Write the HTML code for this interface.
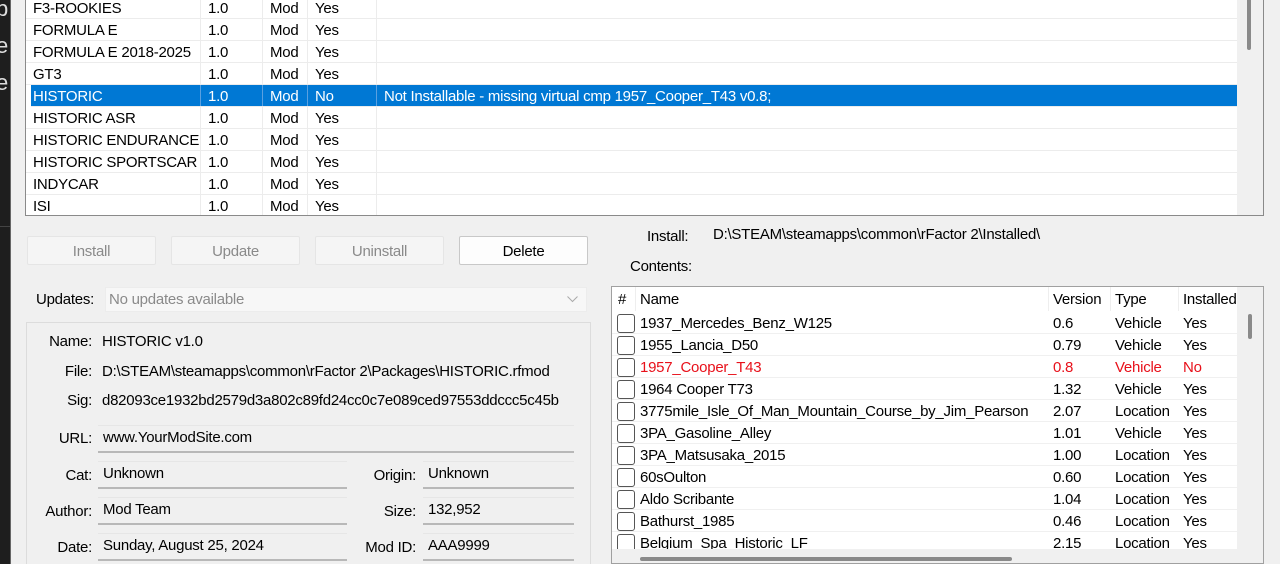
<!DOCTYPE html>
<html><head><meta charset="utf-8"><style>
*{box-sizing:border-box;margin:0;padding:0}
html,body{width:1280px;height:564px;overflow:hidden}
body{background:#f0f0f0;font-family:"Liberation Sans",sans-serif;font-size:15px;letter-spacing:-0.25px;color:#000;position:relative}
.a{position:absolute;white-space:nowrap}
.dark{left:0;top:0;width:10px;height:564px;background:#1e1e1e;color:#ddd;font-size:22px;overflow:hidden}
.tbl{left:25px;top:-3px;width:1239px;height:219px;background:#fff;border:1px solid #8a8a8a;border-top:none;overflow:hidden}
.row{position:absolute;left:0;height:22px;width:1212px;border-bottom:1px solid #ececec;line-height:23px}
.row span{position:absolute;top:0;height:21px;padding-left:7px;border-right:1px solid #ececec}
.sel{background:#0078d4;color:#fff}
.sel span{border-right-color:#5aa0e0}
.vs{position:absolute;right:0;top:0;width:26px;height:219px;background:#f0f0f0}
.btn{top:236px;height:29px;width:129px;border:1px solid #e5e5e5;background:#f5f5f5;color:#8a8a8a;text-align:center;line-height:29px;border-radius:2px}
.lbl{text-align:right}
.fld{background:#f0f0f0;border-top:1px solid #e6e6e6;border-bottom:2px solid #b8b8b8;padding-left:5px;line-height:24px;height:28px}
.ct{left:611px;top:286px;width:653px;height:278px;background:#fff;border:1px solid #a0a0a0;overflow:hidden}
.crow{position:absolute;left:0;height:22px;width:625px;border-bottom:1px solid #f0f0f0;line-height:23px}
.crow span{position:absolute;top:0;padding-left:4px}
.cb{position:absolute;left:5px;top:2px;width:18px;height:19px;border:1px solid #555;border-radius:3px;background:#fff}
.red{color:#e8101a}
</style></head><body>
<div class="a dark"><div style="position:absolute;left:-4px;top:-10px;line-height:37px">b<br>e<br>e</div><div style="position:absolute;left:0;top:226px;width:10px;height:1px;background:#444"></div></div>
<div style="position:absolute;left:10px;top:0;width:1px;height:564px;background:#666"></div>

<div class="a tbl">
<div class="row" style="top:0"><span style="left:0;width:175px">F3-ROOKIES</span><span style="left:175px;width:62px">1.0</span><span style="left:237px;width:45px">Mod</span><span style="left:282px;width:69px">Yes</span></div>
<div class="row" style="top:22px"><span style="left:0;width:175px">FORMULA E</span><span style="left:175px;width:62px">1.0</span><span style="left:237px;width:45px">Mod</span><span style="left:282px;width:69px">Yes</span></div>
<div class="row" style="top:44px"><span style="left:0;width:175px">FORMULA E 2018-2025</span><span style="left:175px;width:62px">1.0</span><span style="left:237px;width:45px">Mod</span><span style="left:282px;width:69px">Yes</span></div>
<div class="row" style="top:66px"><span style="left:0;width:175px">GT3</span><span style="left:175px;width:62px">1.0</span><span style="left:237px;width:45px">Mod</span><span style="left:282px;width:69px">Yes</span></div>
<div class="row sel" style="top:88px;left:5px;width:1207px"><span style="left:-5px;width:175px;padding-left:7px">HISTORIC</span><span style="left:170px;width:62px">1.0</span><span style="left:232px;width:45px">Mod</span><span style="left:277px;width:69px">No</span><span style="left:346px;border:none">Not Installable - missing virtual cmp 1957_Cooper_T43 v0.8;</span></div>
<div class="row" style="top:110px"><span style="left:0;width:175px">HISTORIC ASR</span><span style="left:175px;width:62px">1.0</span><span style="left:237px;width:45px">Mod</span><span style="left:282px;width:69px">Yes</span></div>
<div class="row" style="top:132px"><span style="left:0;width:175px">HISTORIC ENDURANCE</span><span style="left:175px;width:62px">1.0</span><span style="left:237px;width:45px">Mod</span><span style="left:282px;width:69px">Yes</span></div>
<div class="row" style="top:154px"><span style="left:0;width:175px">HISTORIC SPORTSCAR</span><span style="left:175px;width:62px">1.0</span><span style="left:237px;width:45px">Mod</span><span style="left:282px;width:69px">Yes</span></div>
<div class="row" style="top:176px"><span style="left:0;width:175px">INDYCAR</span><span style="left:175px;width:62px">1.0</span><span style="left:237px;width:45px">Mod</span><span style="left:282px;width:69px">Yes</span></div>
<div class="row" style="top:198px;border:none"><span style="left:0;width:175px">ISI</span><span style="left:175px;width:62px">1.0</span><span style="left:237px;width:45px">Mod</span><span style="left:282px;width:69px">Yes</span></div>
<div class="vs"><div style="position:absolute;left:10px;top:0;width:4px;height:53px;background:#8a8a8a;border-radius:2px"></div></div>
</div>

<div class="a btn" style="left:27px">Install</div>
<div class="a btn" style="left:171px">Update</div>
<div class="a btn" style="left:315px">Uninstall</div>
<div class="a btn" style="left:459px;color:#000;background:#fdfdfd;border-color:#c8c8c8">Delete</div>

<div class="a" style="left:647px;top:228px">Install:</div>
<div class="a" style="left:713px;top:226px">D:\STEAM\steamapps\common\rFactor 2\Installed\</div>
<div class="a" style="left:630px;top:258px">Contents:</div>

<div class="a" style="left:36px;top:291px">Updates:</div>
<div class="a" style="left:105px;top:287px;width:482px;height:25px;background:#f7f7f7;border:1px solid #ececec;color:#8a8a8a;padding-left:3px;line-height:24px">No updates available<svg style="position:absolute;right:8px;top:8px" width="11" height="7"><path d="M0.5 0.5L5.5 5.5L10.5 0.5" fill="none" stroke="#aaa"/></svg></div>

<div class="a" style="left:26px;top:322px;width:565px;height:250px;border:1px solid #dcdcdc"></div>
<div class="a lbl" style="left:30px;width:62px;top:333px">Name:</div><div class="a" style="left:102px;top:333px">HISTORIC v1.0</div>
<div class="a lbl" style="left:30px;width:62px;top:363px">File:</div><div class="a" style="left:102px;top:363px">D:\STEAM\steamapps\common\rFactor 2\Packages\HISTORIC.rfmod</div>
<div class="a lbl" style="left:30px;width:62px;top:392px">Sig:</div><div class="a" style="left:102px;top:392px">d82093ce1932bd2579d3a802c89fd24cc0c7e089ced97553ddccc5c45b</div>

<div class="a lbl" style="left:30px;width:62px;top:430px">URL:</div><div class="a fld" style="left:98px;top:425px;width:476px">www.YourModSite.com</div>
<div class="a lbl" style="left:30px;width:62px;top:467px">Cat:</div><div class="a fld" style="left:98px;top:461px;width:249px">Unknown</div>
<div class="a lbl" style="left:340px;width:76px;top:467px">Origin:</div><div class="a fld" style="left:423px;top:461px;width:151px">Unknown</div>
<div class="a lbl" style="left:30px;width:62px;top:503px">Author:</div><div class="a fld" style="left:98px;top:497px;width:249px">Mod Team</div>
<div class="a lbl" style="left:340px;width:76px;top:503px">Size:</div><div class="a fld" style="left:423px;top:497px;width:151px">132,952</div>
<div class="a lbl" style="left:30px;width:62px;top:539px">Date:</div><div class="a fld" style="left:98px;top:533px;width:249px">Sunday, August 25, 2024</div>
<div class="a lbl" style="left:340px;width:76px;top:539px">Mod ID:</div><div class="a fld" style="left:423px;top:533px;width:151px">AAA9999</div>

<div class="a ct">
<div class="crow" style="top:0;height:24px;border:none;line-height:26px"><span style="left:2px">#</span><span style="left:23px;height:24px;border-left:1px solid #eee">Name</span><span style="left:436px;height:24px;border-left:1px solid #eee">Version</span><span style="left:498px;height:24px;border-left:1px solid #eee">Type</span><span style="left:566px;height:24px;border-left:1px solid #eee">Installed</span></div>
<div id="rows"></div>
<div style="position:absolute;left:625px;top:0;width:26px;height:278px;background:#f0f0f0"><div style="position:absolute;left:11px;top:27px;width:4px;height:25px;background:#8a8a8a;border-radius:2px"></div></div>
<div style="position:absolute;left:0;top:262px;width:625px;height:16px;background:#f0f0f0"><div style="position:absolute;left:28px;top:8px;width:372px;height:4px;background:#8a8a8a;border-radius:2px"></div></div>
</div>
<script>
var d=[["1937_Mercedes_Benz_W125","0.6","Vehicle","Yes"],["1955_Lancia_D50","0.79","Vehicle","Yes"],["1957_Cooper_T43","0.8","Vehicle","No",1],["1964 Cooper T73","1.32","Vehicle","Yes"],["3775mile_Isle_Of_Man_Mountain_Course_by_Jim_Pearson","2.07","Location","Yes"],["3PA_Gasoline_Alley","1.01","Vehicle","Yes"],["3PA_Matsusaka_2015","1.00","Location","Yes"],["60sOulton","0.60","Location","Yes"],["Aldo Scribante","1.04","Location","Yes"],["Bathurst_1985","0.46","Location","Yes"],["Belgium_Spa_Historic_LF","2.15","Location","Yes"]];
var h="";d.forEach(function(r,i){h+='<div class="crow'+(r[4]?' red':'')+'" style="top:'+(25+22*i)+'px"><div class="cb"></div><span style="left:24px">'+r[0]+'</span><span style="left:437px">'+r[1]+'</span><span style="left:499px">'+r[2]+'</span><span style="left:567px">'+r[3]+'</span></div>';});
document.getElementById("rows").innerHTML=h;
</script>
</body></html>
